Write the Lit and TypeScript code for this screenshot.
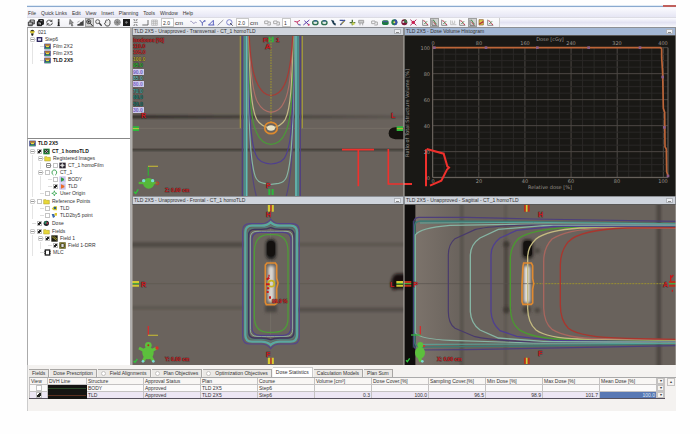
import { LitElement, html, svg, css, nothing } from "lit";
import { customElement, property } from "lit/decorators.js";

const RED = "#c8181c";

/* ---------- toolbar glyphs, drawn on a 27-unit square ---------- */
const glyphs: Record<string, any> = {
  save: svg`<path d="M4 12h12v11H4zM9 12V6h13v12h-6" fill="#8a8a8a" stroke="#333" stroke-width="2.5"/><path d="M6 16h8M12 9h8" stroke="#eee" stroke-width="2"/>`,
  saveAll: svg`<path d="M4 11h13v12H4zM8 11V5h14v14h-5" fill="#333" stroke="#111" stroke-width="3"/><path d="M7 15h6v5M13 8h6" stroke="#fff" stroke-width="2" fill="none"/>`,
  refresh: svg`<path d="M5 14a8 7 0 0 1 15-4M22 14a8 7 0 0 1-15 4" fill="none" stroke="#555" stroke-width="3"/><path d="M22 4v8h-8zM5 24v-8h8z" fill="#555"/>`,
  info: svg`<path d="M14 4v4M14 10v14" stroke="#222" stroke-width="5"/><path d="M10 23h8" stroke="#222" stroke-width="2"/>`,
  arrow: svg`<path d="M9 4l10 11h-5l4 8-4 1-3-8-4 3z" fill="#999" stroke="#444" stroke-width="1.5"/>`,
  hist: svg`<path d="M4 23v-4l6-2 4-5 4-1 5-6v18z" fill="#444"/><path d="M4 13l7-4" stroke="#888" stroke-width="2"/>`,
  zoomIn: svg`<circle cx="11" cy="11" r="6" fill="#ddd" stroke="#222" stroke-width="2.5"/><path d="M16 16l7 8M11 8v6M8 11h6" stroke="#222" stroke-width="3"/>`,
  zoomOut: svg`<circle cx="11" cy="11" r="6" fill="#eee" stroke="#444" stroke-width="2.5"/><path d="M16 16l7 7" stroke="#333" stroke-width="4"/>`,
  hand: svg`<path d="M8 14V8l3-2 2 1 3-3 5 4v10l-4 6h-7l-6-8z" fill="#eee" stroke="#333" stroke-width="2.5"/>`,
  globe: svg`<circle cx="13" cy="13" r="9" fill="#aaa" stroke="#888" stroke-width="2"/><path d="M4 13h18M13 4v18M7 7l12 12M19 7L7 19" stroke="#666" stroke-width="1.5"/>`,
  dark: svg`<rect x="3" y="3" width="21" height="21" fill="#1b1b1b"/><path d="M9 13h9M13 9v9" stroke="#999" stroke-width="2"/>`,
  cross: svg`<path d="M7 5h4v4M20 5h-4v4M7 22h4v-4M20 22h-4v-4M8 13h12" fill="none" stroke="#777" stroke-width="2.5"/>`,
  ruler: svg`<path d="M4 21h17V6" fill="none" stroke="#555" stroke-width="2.5"/>`,
  grid: svg`<path d="M5 6h17v16H5zM5 11h17M5 16h17M11 6v16M17 6v16" fill="none" stroke="#aaa" stroke-width="2"/>`,
  curve: svg`<path d="M4 10c5-3 7 8 11 6s4-5 8-2" fill="none" stroke="#8c86b4" stroke-width="2.5"/>`,
  branch: svg`<path d="M5 6l8 9 8-9M13 15v8" fill="none" stroke="#5b62b4" stroke-width="3"/><circle cx="20" cy="9" r="3" fill="#7b82cc"/>`,
  angle: svg`<path d="M4 21h18M5 21L19 7v14" fill="none" stroke="#5860c0" stroke-width="3"/>`,
  line: svg`<path d="M5 22L22 6" stroke="#8f8fa0" stroke-width="3"/>`,
  roi: svg`<circle cx="13" cy="13" r="8" fill="none" stroke="#6a70c4" stroke-width="2.5"/><path d="M15 15l8 8" stroke="#555" stroke-width="3"/>`,
  gray: svg`<path d="M5 9h10v8H5zM15 12h7v9h-9" fill="none" stroke="#aaa" stroke-width="3"/>`,
  pen: svg`<path d="M4 10l8 2 4 8M12 12l9-5" fill="none" stroke="#c2376b" stroke-width="3"/><path d="M16 20l7 1" stroke="#334a9a" stroke-width="3"/>`,
  scis: svg`<path d="M4 21L22 6M7 8l13 12" stroke="#5b3da8" stroke-width="3"/><circle cx="20" cy="20" r="3" fill="#c2376b"/>`,
  ring: svg`<ellipse cx="13" cy="14" rx="8" ry="6" fill="#dfe9df" stroke="#2d6e50" stroke-width="4"/><path d="M9 9h9" stroke="#2a54a0" stroke-width="3"/>`,
  dart: svg`<path d="M6 5l9 3 1 6 5 3-2 6-7-5z" fill="#1d3c50"/>`,
  brush: svg`<path d="M5 7h12M7 21L21 6" stroke="#3c4f9a" stroke-width="4"/><path d="M10 19l9-10" stroke="#d2b82c" stroke-width="3"/>`,
  plus: svg`<path d="M13 5v17M5 14h17" stroke="#4a6f3c" stroke-width="4"/><circle cx="16" cy="17" r="4" fill="#cbd252"/>`,
  flag: svg`<path d="M5 7h15v8H5zM9 15v7M17 15v7" fill="#ccc" stroke="#999" stroke-width="2.5"/>`,
  green: svg`<rect x="3" y="7" width="20" height="14" rx="5" fill="#1d7a42"/><path d="M6 11h14" stroke="#5550a8" stroke-width="3"/>`,
  orb: svg`<circle cx="13" cy="13" r="9" fill="#22804a"/><path d="M13 4a9 9 0 0 1 0 18z" fill="#3c4ea8"/><circle cx="13" cy="13" r="3" fill="#e8e060"/>`,
  orbRed: svg`<circle cx="13" cy="13" r="9" fill="#7c1636"/><path d="M13 4a9 9 0 0 1 8 12l-8-3z" fill="#35804a"/><circle cx="10" cy="12" r="3" fill="#dcd0d8"/>`,
  spark: svg`<path d="M4 5l18 17M22 5L4 22" stroke="#a82a5a" stroke-width="3"/><circle cx="13" cy="13" r="5" fill="#cc2050"/>`,
  plot: svg`<path d="M5 5v17h17" fill="none" stroke="#777" stroke-width="2.5"/><path d="M7 8c8 0 5 10 14 12" fill="none" stroke="#b83446" stroke-width="3"/><path d="M10 18l8-8" stroke="#3e8e4c" stroke-width="3"/>`,
  plotGray: svg`<path d="M5 7v13h17M10 8v8h7V8" fill="none" stroke="#bbb" stroke-width="2.5"/>`,
  plotSel: svg`<path d="M6 5v17h16" fill="none" stroke="#666" stroke-width="2.5"/><path d="M9 6c7 1 3 10 11 12" fill="none" stroke="#3e8e4c" stroke-width="3"/><path d="M10 12l8 8" stroke="#b83446" stroke-width="3"/>`,
  plotYel: svg`<path d="M6 5h13v16H6z" fill="#dcca4c" stroke="#8a5a2c" stroke-width="2"/><path d="M7 18l12-7" stroke="#b02c3c" stroke-width="4"/>`,
};

/* ---------- tree icons, on a 21-unit square ---------- */
const treeIcons: Record<string, any> = {
  patient: svg`<circle cx="10" cy="8" r="6" fill="#33331c"/><path d="M2 7h16l-4 6H6z" fill="#e2cd32"/><path d="M6 14h8l-2 6H8z" fill="#222"/>`,
  course: svg`<rect x="2" y="3" width="17" height="15" fill="#2e2860"/><rect x="6" y="7" width="9" height="7" fill="#dcdcf0"/>`,
  plan: svg`<rect x="1" y="2" width="19" height="17" fill="#26307c"/><path d="M3 4h15v4H3z" fill="#e08a24"/><path d="M4 8h13l-3 5H7z" fill="#eee23c"/><path d="M3 14h15v4H3z" fill="#3c9a6c"/>`,
  image: svg`<rect x="1" y="2" width="19" height="17" fill="#1c7c34"/><circle cx="10" cy="10" r="6" fill="#333"/><path d="M6 6l9 9M15 6l-9 9" stroke="#c8c8c8" stroke-width="2"/>`,
  film: svg`<rect x="1" y="2" width="19" height="17" fill="#2a2430"/><circle cx="10" cy="10" r="5" fill="#aaa"/><path d="M10 3v14M3 10h14" stroke="#eee" stroke-width="2"/>`,
  folder: svg`<path d="M2 5h7l2 2h8v11H2z" fill="#e8d83a" stroke="#a8982a" stroke-width="1.5"/>`,
  set: svg`<path d="M7 18c-6-4-5-15 3-15s9 11 3 15" fill="none" stroke="#35a04c" stroke-width="3"/>`,
  body: svg`<rect x="1" y="1" width="19" height="19" fill="#c9c4ec"/><path d="M6 4l9 4v5l-9 4z" fill="#2e9a48"/>`,
  tld: svg`<rect x="1" y="1" width="19" height="19" fill="#c9c4ec"/><path d="M6 4l10 4v5L6 17z" fill="#ec6a24"/>`,
  origin: svg`<path d="M10 2v16M2 10h16" stroke="#38a850" stroke-width="3"/><circle cx="10" cy="10" r="4" fill="#fff" stroke="#38a850" stroke-width="2"/>`,
  point: svg`<path d="M2 11l7-7h9v12H8z" fill="#d8cc34"/><circle cx="12" cy="9" r="4" fill="#2a5e80"/>`,
  point2: svg`<path d="M2 6h8l2 8-6 4z" fill="#3a6aae"/><path d="M11 3h7v8h-7z" fill="#e0c92c"/>`,
  dose: svg`<circle cx="10" cy="10" r="8" fill="#20262a"/><circle cx="8" cy="8" r="4" fill="#2b8a64"/><circle cx="13" cy="10" r="3" fill="#b83048"/>`,
  field: svg`<rect x="1" y="1" width="19" height="19" fill="#1f1f14"/><path d="M3 5l14 11M8 4l10 8" stroke="#d6cc3c" stroke-width="2"/>`,
  drr: svg`<rect x="1" y="1" width="19" height="19" fill="#24241a"/><rect x="3" y="3" width="15" height="15" fill="none" stroke="#cfc43a" stroke-width="2"/><rect x="7" y="6" width="7" height="9" fill="#ddd"/>`,
  mlc: svg`<rect x="4" y="3" width="13" height="15" fill="#fff" stroke="#222" stroke-width="4"/><path d="M1 7h3M1 13h3M17 7h3M17 13h3" stroke="#222" stroke-width="3"/>`,
};

interface Node {
  level: number; icon: string; text: string;
  exp?: "-" | "+" | ""; check?: boolean; bold?: boolean; top?: boolean;
}

const courseTree: Node[] = [
  { level: 0, icon: "patient", text: "021" },
  { level: 1, exp: "-", icon: "course", text: "Step6" },
  { level: 2, exp: "", icon: "plan", text: "Film 2X2" },
  { level: 2, exp: "", icon: "plan", text: "Film 2X5" },
  { level: 2, exp: "", icon: "plan", text: "TLD 2X5", bold: true },
];

const planTree: Node[] = [
  { level: 0, icon: "plan", text: "TLD 2X5", bold: true },
  { level: 1, exp: "-", check: true, icon: "image", text: "CT_1 homoTLD", bold: true, top: true },
  { level: 2, exp: "-", icon: "folder", text: "Registered Images" },
  { level: 3, exp: "+", check: false, icon: "film", text: "CT_1 homoFilm" },
  { level: 2, exp: "-", check: false, icon: "set", text: "CT_1" },
  { level: 3, exp: "", check: false, icon: "body", text: "BODY" },
  { level: 3, exp: "", check: true, icon: "tld", text: "TLD" },
  { level: 2, exp: "", check: false, icon: "origin", text: "User Origin" },
  { level: 1, exp: "-", check: false, icon: "folder", text: "Reference Points", top: true },
  { level: 2, exp: "", check: false, icon: "point", text: "TLD" },
  { level: 2, exp: "", check: false, icon: "point2", text: "TLD2by5 point" },
  { level: 1, exp: "", check: true, icon: "dose", text: "Dose", top: true },
  { level: 1, exp: "-", check: true, icon: "folder", text: "Fields", top: true },
  { level: 2, exp: "-", check: true, icon: "field", text: "Field 1" },
  { level: 3, exp: "", check: true, icon: "drr", text: "Field 1-DRR" },
  { level: 2, exp: "", icon: "mlc", text: "MLC" },
];

const checkStyles = css`
  input[type="checkbox"] {
    appearance: none; margin: 0; width: 5px; height: 5px; flex: none;
    border: 1px solid #c4c4c4; background: #fff; box-sizing: border-box;
  }
  input[type="checkbox"]:checked {
    border-color: #bbb;
    background: linear-gradient(135deg, #fff 30%, #222 30%, #222 75%, #fff 75%);
  }
`;

@customElement("plan-tree")
class PlanTree extends LitElement {
  @property({ attribute: false }) nodes: Node[] = [];
  static styles = [checkStyles, css`
    :host { display: block; }
    ul { list-style: none; margin: 0; padding: 1px; }
    li { display: flex; height: 7px; align-items: center; font-size: 5px; line-height: 7px; color: #333; white-space: nowrap; }
    .top { margin-top: 1px; }
    .bold { font-weight: bold; color: #111; }
    .indent { width: 8px; align-self: stretch; flex: none; box-sizing: border-box; background: linear-gradient(#e4e4e4, #e4e4e4) 3px 0 / 1px 100% no-repeat; }
    .exp { width: 7px; height: 7px; flex: none; display: grid; place-items: center; background: linear-gradient(#ddd, #ddd) 3px 3px / 4px 1px no-repeat; }
    .box { width: 5px; height: 5px; padding: 0; box-sizing: border-box; border: 1px solid #ccc; border-radius: 1px; background: linear-gradient(#999, #999) 0 1px / 3px 1px no-repeat #fff; }
    .plus { border-color: #888; }
    .tick { width: 7px; display: grid; place-items: center; flex: none; }
    label { display: flex; align-items: center; }
    svg { width: 7px; height: 7px; flex: none; margin-right: 2px; }
  `];
  render() {
    return html`<ul>${this.nodes.map(n => html`
      <li class="${n.top ? "top" : ""} ${n.bold ? "bold" : ""}">
        ${Array.from({ length: Math.max(0, n.level - 1) }, () => html`<span class="indent"></span>`)}
        ${n.exp === undefined ? nothing : html`<span class="exp">${n.exp
          ? html`<button class="box ${n.exp === "+" ? "plus" : ""}" aria-label="Toggle ${n.text}"></button>` : nothing}</span>`}
        <label>${n.check === undefined ? nothing
          : html`<span class="tick"><input type="checkbox" .checked=${n.check}></span>`}
          <svg viewBox="0 0 21 21">${treeIcons[n.icon]}</svg>${n.text}</label>
      </li>`)}</ul>`;
  }
}

/* ---------- image views ---------- */
const label = (x: number, y: number, s: string, size = 6, fill = RED, extra = "") =>
  svg`<text x=${x} y=${y} font-size=${size} fill=${fill} class="lab ${extra}">${s}</text>`;

const c = (d: string, stroke: string, w = 3.5) =>
  svg`<path d=${d} fill="none" stroke=${stroke} stroke-width=${w}/>`;

const isodoses: [string, string, boolean][] = [
  ["110.0", "#b81818", false], ["105.0", "#c22a2a", false], ["100.0", "#b0a82a", false],
  ["95.0", "#22b030", false], ["90.0", "#6e5cc0", true], ["85.0", "#5ab4b0", false],
  ["80.0", "#7a64c8", true], ["70.0", "#38a49c", false], ["60.0", "#128478", false],
  ["50.0", "#0f766c", false], ["30.0", "#6e5cc0", true],
];

const transversal = svg`
  <defs>
    <linearGradient id="fadeR"><stop offset="0" stop-color="#2c2824"/><stop offset=".6" stop-color="#4a4540"/><stop offset="1" stop-color="#5c5650"/></linearGradient>
    <filter id="soft" x="-50%" y="-50%" width="200%" height="200%"><feGaussianBlur stdDeviation="3"/></filter>
  </defs>
  <g transform="scale(.333333) translate(-6 -33)">
    <rect x="6" y="33" width="816" height="480" fill="#69625c"/>
    <rect x="0" y="271" width="830" height="9" fill="url(#fadeR)" filter="url(#soft)"/>
    <rect x="0" y="372" width="830" height="5" fill="#37322e" filter="url(#soft)"/>
    <rect x="0" y="373" width="830" height="2" fill="#443f3a"/>
    <path d="M6 310H822" stroke="#7b756c" stroke-width="2"/>
    <path d="M822 307H796q-20 2-20 18t20 18h26z" fill="#15120f"/>
    ${c("M331 33V310M517 33V310", "#a39a3c")}
    ${c("M337 33V513M511 33V513", "#51417e", 4)}
    ${c("M344 33V513M504 33V513", "#4a8c8c", 6)}
    ${c("M350 33V513M498 33V513", "#63bdb4", 5)}
    ${c("M355 33C355 300 358 440 379 513M492 33C492 300 489 440 469 513", "#54467f")}
    ${c("M354 33C356 260 357 400 376 455Q382 472 402 475L423 478L446 475Q464 472 470 455C489 400 490 260 493 33", "#86b5a4")}
    ${c("M355 33C357 230 358 340 377 388Q385 414 423 417Q461 414 469 388C489 340 489 230 491 33", "#4f3f90")}
    ${c("M356 33C358 210 362 290 380 323Q394 356 423 358Q452 356 466 323C484 290 488 210 490 33", "#4a9a38")}
    ${c("M357 33C359 180 364 250 380 283Q394 306 423 309Q452 306 466 283C482 250 486 180 489 33", "#c4bb86")}
    ${c("M357 33C360 130 366 200 383 232Q398 260 423 262Q450 260 462 232C480 200 484 130 489 33", "#ad6e66")}
    ${c("M358 33C361 110 368 150 384 180Q400 211 423 212Q448 211 463 180C478 150 484 110 488 33", "#a83a34")}
    <path d="M423 40V292" stroke="#a49a2c" stroke-width="3" stroke-dasharray="5 3"/>
    <ellipse cx="423" cy="309" rx="19" ry="17" fill="none" stroke="#dd8a2e" stroke-width="5"/>
    <ellipse cx="423" cy="309" rx="12" ry="8" fill="#e8e2c4"/>
    <path d="M418 35V52M428 35V52M418 492V510M428 492V510" stroke="#2db83c" stroke-width="6"/>
    <path d="M8 307H27M8 315H27M800 307H819M800 315H819" stroke="#2db83c" stroke-width="6"/>
    <path d="M8 311H27M800 311H819" stroke="#c8cc3a" stroke-width="3"/>
    <path d="M55 452V424" stroke="#35a838" stroke-width="4"/><path d="M54 424H84" stroke="#b4a83c" stroke-width="4"/>
    <ellipse cx="56" cy="475" rx="17" ry="16" fill="#55b83a"/><path d="M26 474H82" stroke="#55b83a" stroke-width="7"/>
    <circle cx="41" cy="467" r="5" fill="#7adcd4"/><circle cx="68" cy="467" r="5" fill="#7adcd4"/><circle cx="82" cy="475" r="4" fill="none" stroke="#d03028" stroke-width="3"/>
    <path d="M12 500l5 5 8-12" stroke="#2fc43c" stroke-width="4" fill="none"/>
    <path d="M636 374H732M685 374V484M775 372V477H822" fill="none" stroke="#f0302c" stroke-width="5"/>
  </g>
  ${label(1, 6, "Isodoses [%]", 5)}
  ${isodoses.map(([s, f, box], i) => {
    const y = 12 + Math.round(i * 6.4);
    return svg`${box ? svg`<rect x="1" y=${y - 5} width="11" height="6" fill="#cfcaea"/>` : nothing}<text x="1" y=${y} font-size="5" fill=${f} class=${box ? "iso" : "lab"}>${s}</text>`;
  })}
  ${label(131, 6, "Fi", 6)}${label(144, 6, "1", 6)}
  ${label(133, 13, "A", 8)}${label(9, 82, "R", 7)}${label(259, 82, "L", 7)}${label(134, 152, "P", 7)}
  ${label(33, 156, "Z: 0.00 cm", 5)}`;

const gx = Array.from({ length: 21 }, (_, i) => 98 + i * 34.6);
const gy = Array.from({ length: 21 }, (_, i) => 68 + i * 19.5);

const histogram = svg`
  <g transform="scale(.333333) translate(-12 -33)">
    <rect x="12" y="33" width="816" height="480" fill="#191815"/>
    ${gx.map((x, i) => svg`<path d="M${x} 68V457" stroke=${i % 4 ? "#2a2826" : "#4c4844"} stroke-width="3"/>`)}
    ${gy.map((y, i) => svg`<path d="M98 ${y}H804" stroke=${i % 4 ? "#2a2826" : "#4c4844"} stroke-width="3"/>`)}
    <path d="M98 60V457H804V68" fill="none" stroke="#6e6761" stroke-width="3"/>
    <path d="M98 68H782L785 72V98L788 145L790 250L794 262L795 365L799 372L800 440L805 455" fill="none" stroke="#bd6538" stroke-width="5"/>
    ${[[103, 68], [258, 68], [412, 68], [566, 68], [720, 68], [788, 156], [793, 307], [804, 453]].map(
      ([x, y]) => svg`<rect x=${x - 4} y=${y - 4} width="8" height="8" fill="#8a5c86"/>`)}
    <path d="M12 477H36M78 373V484M80 372L131 386L142 424L147 428L141 434L124 467L90 482" fill="none" stroke="#f0302c" stroke-width="6"/>
  </g>
  <g class="axis">
    ${["0", "80", "160", "240", "320", "400"].map((s, i) => svg`<text x=${29 + i * 46} y="9">${s}</text>`)}
    ${["0", "20", "40", "60", "80", "100"].map((s, i) => svg`<text x=${29 + i * 46} y="147">${s}</text>`)}
    ${["100", "80", "60", "40", "20", "0"].map((s, i) => svg`<text x="26" y=${14 + i * 26} class="end">${s}</text>`)}
    <text x="146" y="5">Dose [cGy]</text>
    <text x="146" y="153">Relative dose [%]</text>
    <text x="0" y="0" transform="translate(5 77) rotate(-90)">Ratio of Total Structure Volume [%]</text>
  </g>`;

const lobed = (x0: number, x1: number, y0: number, y1: number, r: number, n: number) =>
  `M${x0 + r} ${y0}H394Q412 ${y0} 422 ${y0 - n}Q432 ${y0} 450 ${y0}H${x1 - r}Q${x1} ${y0} ${x1} ${y0 + r}V${y1 - r}Q${x1} ${y1} ${x1 - r} ${y1}` +
  `H450Q432 ${y1} 422 ${y1 + n}Q412 ${y1} 394 ${y1}H${x0 + r}Q${x0} ${y1} ${x0} ${y1 - r}V${y0 + r}Q${x0} ${y0} ${x0 + r} ${y0}Z`;

const frontal = svg`
  <defs><filter id="soft" x="-50%" y="-50%" width="200%" height="200%"><feGaussianBlur stdDeviation="4"/></filter></defs>
  <g transform="scale(.333333) translate(-6 -30)">
    <rect x="6" y="30" width="816" height="480" fill="#6a635d"/>
    <rect x="-10" y="142" width="350" height="14" fill="#4e4843" filter="url(#soft)"/>
    <rect x="500" y="144" width="340" height="9" fill="#59534d" filter="url(#soft)"/>
    <rect x="-10" y="334" width="350" height="9" fill="#5a544e" filter="url(#soft)"/>
    <rect x="500" y="338" width="340" height="12" fill="#514b46" filter="url(#soft)"/>
    <path d="M6 266H822" stroke="#5c564f" stroke-width="2"/>
    <path d="M422 90V450" stroke="#79726a" stroke-width="2"/>
    <path d="M830 236H800q-16 4-16 30t16 16h30z" fill="#120f0d" filter="url(#soft)"/>
    ${c(lobed(338, 508, 86, 447, 22, 14), "#54458c")}
    ${c(lobed(346, 501, 92, 440, 20, 10), "#5aa8a0", 7)}
    ${c(lobed(353, 495, 99, 433, 18, 7), "#4a807c", 3)}
    ${c(lobed(356, 492, 103, 429, 18, 5), "#3d3560", 4)}
    ${c(lobed(361, 488, 109, 424, 20, 0), "#8fae9f", 3)}
    ${c(lobed(366, 483, 112, 421, 24, 0), "#4f408c")}
    ${c("M412 119H432Q474 120 474 170V370Q474 412 432 412H412Q374 410 373 366V170Q374 122 412 119Z", "#4f9a3a", 4)}
    <rect x="408" y="133" width="30" height="60" rx="14" fill="#171412" filter="url(#soft)"/>
    <rect x="411" y="138" width="24" height="46" rx="11" fill="#14110f"/>
    <rect x="405" y="330" width="36" height="22" fill="#4a453f" filter="url(#soft)"/>
    <rect x="414" y="212" width="19" height="110" rx="8" fill="#d9d6d1" filter="url(#soft)"/>
    ${c("M411 204H436L440 210V250L444 264L440 280V325L434 329H409L406 322V210Z", "#e08a30", 5)}
    <circle cx="424" cy="266" r="9" fill="none" stroke="#c6b422" stroke-width="5"/>
    <path d="M415 242h4M410 254l8-6M408 268h11M411 280h7M413 288v6M420 304v7" stroke="${RED}" stroke-width="6"/>
    <path d="M417 30V50M428 30V50M417 488V507M428 488V507" stroke="#d6ca32" stroke-width="7"/>
    <path d="M423 30V50M423 488V507" stroke="#c83a20" stroke-width="4"/>
    <path d="M6 261H27M6 272H27M799 261H819M799 272H819" stroke="#d6ca32" stroke-width="6"/>
    <path d="M6 266H27M799 266H819" stroke="#48a838" stroke-width="4"/>
    <path d="M55 393V422" stroke="#d03030" stroke-width="4"/><path d="M54 421H84" stroke="#b4a83c" stroke-width="4"/>
    <circle cx="55" cy="451" r="10" fill="#5cc03c"/><ellipse cx="54" cy="474" rx="17" ry="19" fill="#5cc03c"/>
    <path d="M27 459L48 470M80 459L60 470M40 498L48 482M70 498L60 482" stroke="#5cc03c" stroke-width="9"/>
    <circle cx="55" cy="451" r="3" fill="#b03020"/><circle cx="81" cy="459" r="5" fill="#d83028"/><circle cx="39" cy="499" r="4" fill="#7adcd4"/><circle cx="70" cy="499" r="4" fill="#7adcd4"/>
    <path d="M11 498l4 4 7-10" stroke="#2fc43c" stroke-width="4" fill="none"/>
  </g>
  ${label(134, 12, "H", 7)}${label(9, 82, "R", 7)}${label(258, 82, "L", 7)}${label(134, 152, "F", 7)}
  ${label(140, 98, "99.9 %", 5)}${label(33, 156, "Y: 0.00 cm", 5)}`;

const sagittal = svg`
  <defs><filter id="soft" x="-50%" y="-50%" width="200%" height="200%"><feGaussianBlur stdDeviation="4"/></filter>
    <linearGradient id="lift"><stop offset="0" stop-color="#7c736b"/><stop offset="1" stop-color="#69625c"/></linearGradient></defs>
  <g transform="scale(.333333) translate(-12 -30)">
    <rect x="12" y="30" width="816" height="480" fill="#69625c"/>
    <rect x="46" y="30" width="140" height="480" fill="url(#lift)"/>
    <rect x="182" y="20" width="7" height="500" fill="#4f4944" filter="url(#soft)"/>
    <rect x="770" y="20" width="13" height="500" fill="#4b4540" filter="url(#soft)"/>
    <rect x="313" y="20" width="8" height="500" fill="#5c5650" filter="url(#soft)"/>
    <rect x="314" y="140" width="9" height="215" fill="#463f3a" filter="url(#soft)"/>
    <rect x="12" y="30" width="34" height="480" fill="#100e0d"/>
    <rect x="366" y="132" width="34" height="60" rx="14" fill="#2a2622" filter="url(#soft)"/>
    <rect x="370" y="138" width="26" height="46" rx="9" fill="#14110f"/>
    <circle cx="412" cy="167" r="8" fill="#4a443e" filter="url(#soft)"/><circle cx="380" cy="344" r="12" fill="#403a35" filter="url(#soft)"/>
    <circle cx="319" cy="148" r="9" fill="#3c3732" filter="url(#soft)"/><circle cx="319" cy="344" r="9" fill="#3c3732" filter="url(#soft)"/><circle cx="412" cy="346" r="8" fill="#4a443e" filter="url(#soft)"/>
    <rect x="372" y="212" width="18" height="112" rx="8" fill="#e4e1dc" filter="url(#soft)"/>
    <path d="M46 266H420" stroke="#58524c" stroke-width="2"/>
    <path d="M400 266H800" stroke="#9a9030" stroke-width="3" stroke-dasharray="6 3"/>
    <rect x="38" y="78" width="10" height="380" fill="#286058" opacity=".7"/>
    ${c("M828 79L400 72L200 67H56Q41 68 41 84V448Q41 463 56 465L200 464L400 460L828 452", "#4d3f7c")}
    ${c("M828 86L400 80L60 78Q44 80 44 94V440Q44 453 60 456L400 453L828 446", "#3f7a74", 4)}
    ${c("M828 87L400 82L60 84M828 445L400 447L60 448", "#5aa89c", 3)}
    ${c("M828 89L400 87L150 91Q60 98 46 120V414Q60 432 150 436L400 444L828 441", "#86b5a4")}
    ${c("M828 91L400 90Q260 93 225 104L165 131Q145 148 145 180V350Q145 385 165 400L225 425Q270 436 400 441L828 439", "#483a6c")}
    ${c("M828 93L430 92L295 103L240 129Q212 148 211 180V350Q213 385 240 405L295 429L430 439L828 438", "#86b5a4", 4)}
    ${c("M828 95L460 94L350 106L300 129Q273 150 273 180V350Q275 385 300 407L350 424L460 436L828 437", "#4f3f90", 4)}
    ${c("M828 97L500 98Q395 104 356 130Q332 155 331 190V340Q333 385 356 403Q395 430 500 433L828 436", "#4a9a30", 4)}
    ${c("M828 98L540 99Q440 106 408 132Q382 156 383 190V340Q384 385 408 405Q440 429 540 432L828 435", "#c4bb80", 4)}
    ${c("M828 99L600 100Q500 104 456 132Q431 158 431 200V340Q433 385 456 403Q500 430 600 431L828 434", "#a8665e", 4)}
    ${c("M828 98L680 99Q540 104 505 140Q481 170 481 210V330Q481 375 505 400Q540 428 680 430L828 433", "#a8362e", 4)}
    ${c("M371 204H394L398 212V250L401 266L398 282V324L394 328H369L366 320V270L369 214Z", "#e08a30", 5)}
    <path d="M375 30V50M386 30V50M375 488V507M386 488V507" stroke="#b8301c" stroke-width="6"/>
    <path d="M380 30V50M380 488V507" stroke="#d6ca32" stroke-width="5"/>
    <path d="M12 261H34M12 272H34M807 261H828M807 272H828" stroke="#b8301c" stroke-width="6"/>
    <path d="M12 266H34M807 266H828" stroke="#48a838" stroke-width="4"/>
    <path d="M61 393V420" stroke="#d03030" stroke-width="4"/><path d="M33 420H62" stroke="#38b040" stroke-width="4"/>
    <circle cx="61" cy="450" r="9" fill="#5cc03c"/><ellipse cx="60" cy="473" rx="15" ry="18" fill="#5cc03c"/><path d="M58 488l5 12" stroke="#5cc03c" stroke-width="10"/>
    <circle cx="72" cy="453" r="3" fill="#d83028"/><circle cx="67" cy="499" r="4" fill="#7adcd4"/>
    <path d="M18 496l4 4 7-10" stroke="#2fc43c" stroke-width="4" fill="none"/>
    <path d="M812 240v18M820 240l-6 8M817 284v6" stroke="${RED}" stroke-width="4"/>
  </g>
  ${label(134, 12, "H", 7)}${label(9, 82, "P", 7)}${label(259, 82, "A", 7)}${label(134, 151, "F", 7)}
  ${label(33, 156, "X: 0.00 cm", 5)}`;

@customElement("image-view")
class ImageView extends LitElement {
  @property() name = "";
  @property({ type: Boolean }) active = false;
  @property({ attribute: false }) drawing: any;
  static styles = css`
    :host { display: block; min-width: 0; }
    header { display: flex; justify-content: space-between; align-items: center; height: 9px; box-sizing: border-box; padding: 0 2px 0 1px;
      background: #cfd4dc; border: 1px solid #8c8f94; border-bottom-color: #5a5856; color: #333; white-space: nowrap; }
    header.active { background: #a3b7d4; }
    h2 { margin: 0; font-weight: normal; font-size: 5px; line-height: 7px; }
    button { width: 7px; height: 5px; padding: 0; border: 1px solid #b0b4ba; background: linear-gradient(#888, #888) 1px 2px / 3px 1px no-repeat #eceef2; }
    .canvas { display: block; width: 100%; height: auto; box-sizing: border-box; }
    .lab { font-weight: bold; paint-order: stroke; stroke: #2a1010; stroke-width: 1px; stroke-opacity: .45; }
    .iso { font-weight: bold; }
    .axis { fill: #9a948e; font: 5px "DejaVu Sans", sans-serif; text-anchor: middle; }
    .end { text-anchor: end; }
  `;
  render() {
    return html`<header class=${this.active ? "active" : ""}><h2>${this.name}</h2><button aria-label="Maximize"></button></header>
      <svg class="canvas" viewBox="0 0 272 160">${this.drawing}
        <path d="M0 0V160M272 0V160" stroke="#b8b4ae" stroke-width="1"/></svg>`;
  }
}

/* ---------- shell ---------- */
type Tool = string | { sep: number } | { field: string; unit?: string; wide?: boolean } | { on: string };
const tools: Tool[] = [
  "save", "saveAll", "refresh", "info", { sep: 4 },
  "arrow", "hist", { on: "zoomIn" }, "zoomOut", "hand", { sep: 1 }, "globe", "dark", "cross", { sep: 1 }, "ruler", "grid", { sep: 2 },
  { field: "2.0", unit: "cm", wide: true }, { sep: 6 },
  "curve", "branch", "angle", "line", "roi", { sep: 2 }, { field: "2.0", unit: "cm", wide: true }, { sep: 5 },
  "gray", "gray", { sep: 1 }, { field: "1" }, { sep: 2 },
  "pen", "scis", "ring", "ring", "dart", "brush", { sep: 1 }, "plus", "flag", { sep: 4 },
  "gray", { sep: 2 }, "green", "orb", { sep: 1 }, "orbRed", "spark", { sep: 3 },
  "plot", { on: "plotSel" }, { sep: 1 }, "plot", "plotGray", "plot", { sep: 1 }, { on: "plotSel" }, "plotYel", "plot", { sep: 4 },
];

const tabs: { text: string; mark?: boolean; on?: boolean }[] = [
  { text: "Fields" }, { text: "Dose Prescription" }, { text: "Field Alignments", mark: true },
  { text: "Plan Objectives", mark: true }, { text: "Optimization Objectives", mark: true },
  { text: "Dose Statistics", on: true }, { text: "Calculation Models" }, { text: "Plan Sum" },
];

const columns = ["View", "DVH Line", "Structure", "Approval Status", "Plan", "Course", "Volume [cm³]",
  "Dose Cover.[%]", "Sampling Cover.[%]", "Min Dose [%]", "Max Dose [%]", "Mean Dose [%]"];

const rows = [
  { on: false, line: "#2c4a2a", cells: ["BODY", "Approved", "TLD 2X5", "Step6", "", "", "", "", "", ""] },
  { on: true, line: "#5a3020", cells: ["TLD", "Approved", "TLD 2X5", "Step6", "0.3", "100.0", "96.5", "98.9", "101.7", "100.0"] },
];

@customElement("app-root")
class AppRoot extends LitElement {
  static styles = [checkStyles, css`
    :host { display: block; min-height: 100vh; box-sizing: border-box; padding: 5px 24px 20px 27px; background: #fefefe;
      font-family: "Liberation Sans", Arial, sans-serif; font-size: 5px; color: #333; }
    button, input { font: inherit; color: inherit; }
    .strip { height: 3px; display: flex; justify-content: flex-end; background: linear-gradient(#dfeaf4 0 1px, #8aa9cf 1px 2px, #f4f6fb 2px); }
    .close { width: 13px; height: 2px; background: #c0605c; }
    nav { display: flex; height: 9px; align-items: center; padding-left: 1px; background: linear-gradient(#fafafe, #e6e6f4); }
    nav button { border: 0; background: none; padding: 0; margin-right: 5px; line-height: 8px; }
    .tools { display: flex; height: 10px; box-sizing: border-box; align-items: center; border-top: 1px solid #dcdce4; background: linear-gradient(#fbfbfd, #f1f1f5); }
    .tools .rest { flex: 1; align-self: stretch; border-left: 1px solid #ccc; background: linear-gradient(#fbfbff, #e2e2f2 50%, #f8f8fc); }
    .tool { width: 9px; height: 9px; padding: 0; border: 0; background: none; flex: none; }
    .tool svg { display: block; width: 9px; height: 9px; }
    .tool.on { background: #d2d2d2; outline: 1px solid #a0a0a0; outline-offset: -1px; }
    .field { width: 9px; height: 9px; padding: 0 1px; box-sizing: border-box; border: 1px solid #c8c8c8; background: #fff; flex: none; }
    .field.wide { width: 13px; }
    .unit { display: flex; align-items: center; font-size: 6px; width: 22px; gap: 1px; }
    .unit input { font-size: 5px; }
    main { display: grid; grid-template-columns: 105px minmax(0, 1fr) minmax(0, 1fr); }
    aside { grid-row: span 2; display: flex; flex-direction: column; background: #fff; border-top: 1px solid #999; border-right: 2px solid #b0aeac; }
    aside .top { flex: 0 0 110px; border-left: 1px solid #aaa; }
    aside .bottom { flex: 1; border-top: 1px solid #888; border-left: 1px solid #aaa; }
    .panel { background: #f4f2f0; padding: 2px 0 12px 1px; border-left: 1px solid #ccc; }
    .tabs { display: flex; height: 10px; align-items: flex-end; gap: 1px; }
    .tabs button { display: flex; align-items: center; gap: 4px; height: 8px; padding: 0 3px; border: 1px solid #a8a6a4; border-width: 1px 1px 0 0; background: #ebe9e6; line-height: 7px; white-space: nowrap; }
    .tabs button.on { height: 10px; background: #fff; border-color: #ccc; }
    .mark { width: 5px; height: 5px; box-sizing: border-box; border: 1px solid #c4c2c0; border-radius: 50%; background: #fff; }
    .sheet { display: flex; gap: 2px; align-items: flex-start; border-top: 1px solid #aaa; }
    table { flex: 1; border-collapse: collapse; table-layout: fixed; width: 100%; background: #fbfafa; }
    th, td { height: 6px; padding: 0 1px; border: 1px solid #c4c2c2; border-top: 0; font-weight: normal; text-align: left; line-height: 6px; white-space: nowrap; overflow: hidden; }
    th { background: #f8f6f4; }
    .c-view { width: 18px; } .c-line { width: 39px; } .c-end { width: 8px; }
    .sel td { background: #ece6f4; border-bottom-color: #55505c; border-top: 1px solid #55505c; }
    td.num { text-align: right; }
    .sel td.hot { background: #5878b4; color: #dfe6f2; }
    td.tickcell { text-align: center; }
    td.tickcell label { display: grid; place-items: center; }
    .tickcell input[type="checkbox"] { width: 6px; height: 6px; }
    td.curve, .sel td.curve { padding: 0; background: #141412; border-color: #141412; }
    .curve i { display: block; height: 1px; }
    .drop, .scroll { display: block; padding: 0; border: 1px solid #c4c2c0; background: #f4f2f0; font-size: 4px; line-height: 4px; text-align: center; box-sizing: border-box; }
    .drop { width: 7px; height: 6px; }
    .scroll { width: 8px; height: 8px; margin-right: 1px; }
    th.endcell, td.endcell, .sel td.endcell { padding: 0; background: #f4f2f0; }
  `];

  private tool(t: Tool) {
    if (typeof t === "string") return html`<button class="tool" aria-label=${t}><svg viewBox="0 0 27 27" fill="none">${glyphs[t]}</svg></button>`;
    if ("on" in t) return html`<button class="tool on" aria-label=${t.on}><svg viewBox="0 0 27 27" fill="none">${glyphs[t.on]}</svg></button>`;
    if ("sep" in t) return html`<span style="width:${t.sep}px"></span>`;
    const box = html`<input class="field ${t.wide ? "wide" : ""}" .value=${t.field} aria-label="Size">`;
    return t.unit ? html`<label class="unit">${box}${t.unit}</label>` : box;
  }

  render() {
    return html`
      <div class="strip"><span class="close"></span></div>
      <nav>${["File", "Quick Links", "Edit", "View", "Insert", "Planning", "Tools", "Window", "Help"].map(m => html`<button>${m}</button>`)}</nav>
      <div class="tools">${tools.map(t => this.tool(t))}<span class="rest"></span></div>
      <main>
        <aside>
          <plan-tree class="top" .nodes=${courseTree}></plan-tree>
          <plan-tree class="bottom" .nodes=${planTree}></plan-tree>
        </aside>
        <image-view name="TLD 2X5 - Unapproved - Transversal - CT_1 homoTLD" .drawing=${transversal}></image-view>
        <image-view active name="TLD 2X5 - Dose Volume Histogram" .drawing=${histogram}></image-view>
        <image-view name="TLD 2X5 - Unapproved - Frontal - CT_1 homoTLD" .drawing=${frontal}></image-view>
        <image-view name="TLD 2X5 - Unapproved - Sagittal - CT_1 homoTLD" .drawing=${sagittal}></image-view>
      </main>
      <section class="panel">
        <div class="tabs">${tabs.map(t => html`<button class=${t.on ? "on" : ""}>${t.mark ? html`<span class="mark"></span>` : nothing}${t.text}</button>`)}</div>
        <div class="sheet">
          <table>
            <colgroup><col class="c-view"><col class="c-line">${columns.slice(2).map(() => html`<col>`)}<col class="c-end"></colgroup>
            <thead><tr>${columns.map(h => html`<th>${h}</th>`)}<th class="endcell"><button class="drop" aria-label="Columns">▾</button></th></tr></thead>
            <tbody>${rows.map(r => html`<tr class=${r.on ? "sel" : ""}>
              <td class="tickcell"><label><input type="checkbox" .checked=${r.on} aria-label="View ${r.cells[0]}"></label></td>
              <td class="curve"><i style="background:${r.line}"></i></td>
              ${r.cells.map((v, i) => html`<td class="${i > 3 ? "num" : ""} ${i === 9 ? "hot" : ""}">${v}</td>`)}
              <td class="endcell"><button class="drop" aria-label="Row menu">▾</button></td></tr>`)}</tbody>
          </table>
          <button class="scroll" aria-label="Scroll up">▴</button>
        </div>
      </section>`;
  }
}
